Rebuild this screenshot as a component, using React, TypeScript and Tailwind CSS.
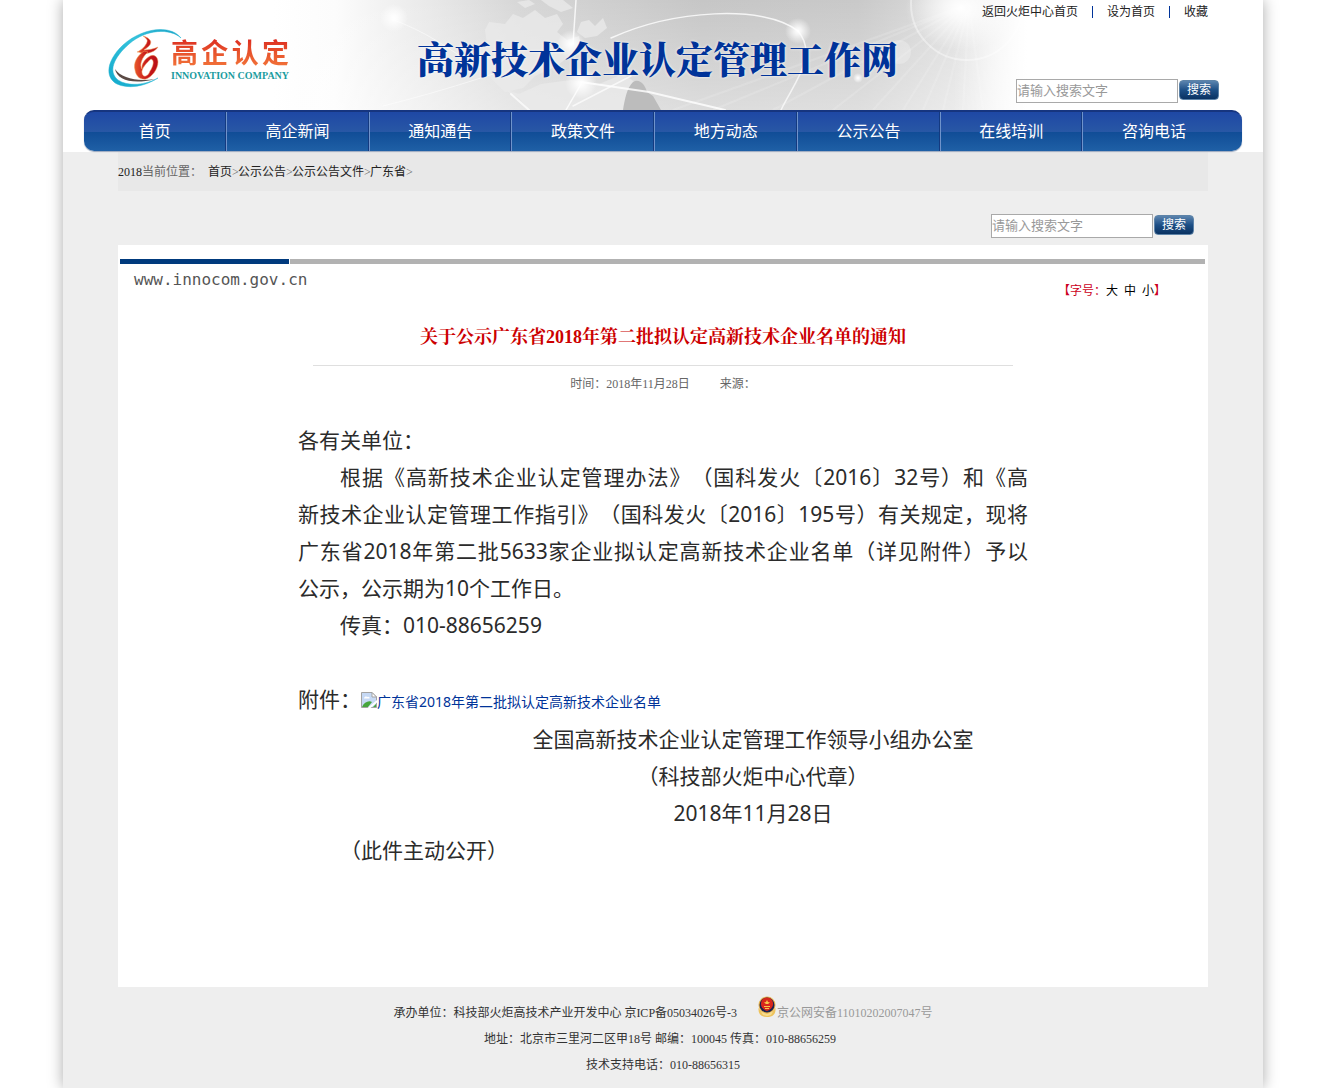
import { clsx } from "clsx";
import type { ReactNode } from "react";

const SONG = "font-['Liberation_Serif','Noto_Sans_CJK_SC',serif]";
const HEI = "font-['Noto_Sans','Noto_Sans_CJK_SC',sans-serif]";

const NAV_ITEMS = [
	"首页",
	"高企新闻",
	"通知通告",
	"政策文件",
	"地方动态",
	"公示公告",
	"在线培训",
	"咨询电话",
];

const CRUMBS = ["首页", "公示公告", "公示公告文件", "广东省"];

const TOP_LINKS = ["返回火炬中心首页", "设为首页", "收藏"];

const NOTICE_LINES = [
	"根据《高新技术企业认定管理办法》（国科发火〔2016〕32号）和《高",
	"新技术企业认定管理工作指引》（国科发火〔2016〕195号）有关规定，现将",
	"广东省2018年第二批5633家企业拟认定高新技术企业名单（详见附件）予以",
];

function LogoMark() {
	return (
		<svg
			viewBox="0 0 76 62"
			className="h-[62px] w-[76px] flex-none"
			aria-hidden="true"
		>
			<defs>
				<linearGradient id="ring" x1="0" y1="1" x2="1" y2="0">
					<stop offset="0" stopColor="#12a9cc" />
					<stop offset="0.6" stopColor="#35c3dc" />
					<stop offset="1" stopColor="#1c9fc4" />
				</linearGradient>
				<linearGradient id="flame" x1="0" y1="0" x2="1" y2="0">
					<stop offset="0" stopColor="#e8582c" />
					<stop offset="0.5" stopColor="#c81a1c" />
					<stop offset="1" stopColor="#b80f16" />
				</linearGradient>
			</defs>
			<path
				d="M73 12 C62 2 38 3 21 18 C5 32 0 46 10 54 C20 61 38 59 50 52 C36 61 20 63 9 58 C-4 51 -1 34 15 19 C34 2 62 -2 73 12Z"
				fill="url(#ring)"
				stroke="#22b5d2"
				strokeWidth="0.5"
			/>
			<path
				d="M7 43 C9 54 25 59 47 53 C29 56 13 52 7 43Z"
				fill="#5b4a45"
			/>
			<path
				d="M35 10 C42 12 45 16 41 20 C39 22 37 23 36 24 C40 24 46 23 50 21 C47 26 41 27 36 28 C34 27 32 26 29 26 C32 25 38 20 39 16 C40 14 38 12 35 10Z"
				fill="url(#flame)"
				stroke="#f3a45c"
				strokeWidth="0.5"
			/>
			<path
				fillRule="evenodd"
				d="M36 25 C29 30 25 37 27 44 C28 51 33 54 38 53 C44 51 50 43 50 36 C50 31 46 28 42 30 C37 33 33 38 34 43 C31 39 34 31 40 26Z M43 33 C47 34 45 41 42 45 C40 51 35 52 34 47 C33 43 39 36 43 33Z"
				fill="url(#flame)"
				stroke="#f3a45c"
				strokeWidth="0.5"
			/>
		</svg>
	);
}

function BannerArt() {
	return (
		<svg
			viewBox="0 0 780 110"
			preserveAspectRatio="xMidYMid slice"
			className="absolute top-0 left-1/2 h-[110px] w-[780px] -translate-x-1/2"
			aria-hidden="true"
		>
			<defs>
				<linearGradient id="sky" x1="0" y1="0" x2="1" y2="0">
					<stop offset="0" stopColor="#fff" />
					<stop offset="0.08" stopColor="#fcfcfc" />
					<stop offset="0.18" stopColor="#ececec" />
					<stop offset="0.32" stopColor="#d6d6d6" />
					<stop offset="0.55" stopColor="#c6c6c6" />
					<stop offset="0.75" stopColor="#c9c9c9" />
					<stop offset="0.9" stopColor="#e2e2e2" />
					<stop offset="1" stopColor="#fff" />
				</linearGradient>
				<radialGradient id="glow">
					<stop offset="0" stopColor="#fff" />
					<stop offset="0.25" stopColor="#fff" stopOpacity="0.8" />
					<stop offset="1" stopColor="#fff" stopOpacity="0" />
				</radialGradient>
				<linearGradient id="fade" x1="0" y1="0" x2="0" y2="1">
					<stop offset="0" stopColor="#fff" stopOpacity="0" />
					<stop offset="1" stopColor="#fff" stopOpacity="0.4" />
				</linearGradient>
				<linearGradient id="edge">
					<stop offset="0" stopColor="#fff" stopOpacity="0" />
					<stop offset="0.75" stopColor="#fff" />
				</linearGradient>
			</defs>
			<rect width="780" height="110" fill="url(#sky)" />
			<rect width="780" height="110" fill="url(#fade)" />
			<g fill="#ebebeb" opacity="0.75">
				<path d="M212 30 L216 22 L232 24 L240 14 L250 18 L262 10 L272 18 L284 14 L290 24 L284 32 L294 40 L306 36 L308 46 L296 56 L284 66 L262 76 L250 88 L232 92 L220 80 L206 68 L200 54 L214 44Z" />
				<path d="M244 2 L256 0 L262 4 L252 8Z M268 0 L290 0 L300 8 L288 12 L276 6Z" />
				<path d="M308 22 L316 20 L322 26 L330 18 L334 28 L324 36 L312 38 L304 32Z" />
				<path d="M232 90 L246 94 L268 84 L298 80 L326 84 L350 74 L362 82 L374 92 L376 110 L256 110 L246 98Z" />
			</g>
			<path
				d="M360 82 C366 78 372 84 374 92 L380 96 L388 110 L350 110 C352 98 354 88 360 82Z"
				fill="#bcbcbc"
			/>
			<g fill="none" stroke="#fff" strokeLinecap="round">
				<path
					d="M338 38 C400 10 490 4 525 31"
					strokeWidth="1.5"
					opacity="0.8"
				/>
				<path
					d="M525 31 C546 56 520 84 508 110"
					strokeWidth="1.5"
					opacity="0.7"
				/>
				<path
					d="M303 0 L300 44 M308 84 L293 110"
					strokeWidth="1.5"
					opacity="0.8"
				/>
				<path d="M308 82 L376 92 L452 110" strokeWidth="2" opacity="0.8" />
				<path d="M238 94 L256 110" strokeWidth="2" opacity="0.7" />
				<path d="M300 106 L358 76" strokeWidth="1.5" opacity="0.7" />
				<path d="M118 19 C150 30 180 50 200 66" opacity="0.5" />
				<path d="M110 106 C150 96 190 84 220 74" opacity="0.5" />
				<circle cx="694" cy="4" r="56" strokeWidth="2" opacity="0.4" />
			</g>
			<path
				d="M696 4 L400 110 M696 4 L440 110 M696 4 L500 110 M696 4 L560 110 M696 4 L600 110 M696 4 L630 110 M696 4 L650 110 M696 4 L670 110 M696 4 L690 110 M696 4 L710 110"
				stroke="#fff"
				opacity="0.14"
				strokeWidth="2"
			/>
			<g fill="url(#glow)">
				<circle cx="121" cy="18" r="14" />
				<circle cx="525" cy="31" r="13" />
				<circle cx="308" cy="83" r="16" />
				<circle cx="298" cy="44" r="14" />
				<circle cx="585" cy="78" r="5" />
				<ellipse cx="688" cy="8" rx="56" ry="42" />
			</g>
			<circle cx="626" cy="52" r="12" fill="#fff" opacity="0.25" />
			<rect x="680" width="100" height="110" fill="url(#edge)" />
		</svg>
	);
}

function BrokenImageIcon() {
	return (
		<svg
			viewBox="0 0 16 16"
			className="inline-block size-4 align-[-1px]"
			aria-hidden="true"
		>
			<path
				d="M0.5 0.5 H11 L15.5 5 V15.5 H0.5Z"
				fill="#c6d9f5"
				stroke="#a3a3a3"
			/>
			<path d="M3 6.5 C3 4 6 4 6.5 5 C8 4.5 9 5.5 8.5 6.5Z" fill="#fff" />
			<path d="M1 15 C3 10 8 8 11 10 L7 15Z" fill="#47a63c" />
			<path d="M11 0.5 V5 H15.5Z" fill="#fff" stroke="#a3a3a3" />
			<path d="M16 8 L6.5 16 H9.5 L16 10.5Z" fill="#fff" />
			<path d="M12 15 L15 12 V15Z" fill="#47a63c" />
		</svg>
	);
}

function PoliceBadge() {
	return (
		<svg viewBox="0 0 20 22" className="h-[22px] w-5" aria-hidden="true">
			<path
				d="M1.5 12 C1 18 4 21 10 21 C16 21 19 18 18.5 12 L14 17 H6Z"
				fill="#eec35c"
			/>
			<circle cx="10" cy="9" r="8.5" fill="#e9b44c" />
			<circle cx="10" cy="9" r="7.5" fill="#1b2350" />
			<path
				d="M10 1.5 C14 1.5 16.5 5 16 9 C15.5 12 13 14 10 15 C7 14 4.5 12 4 9 C3.5 5 6 1.5 10 1.5Z"
				fill="#d8271c"
			/>
			<path d="M10 4 L11 6 L13 6.5 L11 8 H9 L7 6.5 L9 6Z" fill="#f6c94c" />
			<path d="M7 10 H13 V11 H7Z M8 12 H12 V13 H8Z" fill="#f6c94c" />
			<path d="M4 16 L10 18 L16 16 L14 19 L10 20 L6 19Z" fill="#f7dc8d" />
		</svg>
	);
}

function SearchForm({ id, className }: { id: string; className?: string }) {
	return (
		<form
			className={clsx("flex items-start gap-px", className)}
			onSubmit={(event) => event.preventDefault()}
		>
			<input
				id={id}
				type="text"
				aria-label="搜索文字"
				placeholder="请输入搜索文字"
				className={clsx(
					HEI,
					"h-6 w-[162px] border border-[#a9a9a9] bg-white pb-0.5 text-[13px] leading-5 text-[#333] placeholder:text-[#999]",
				)}
			/>
			<button
				type="submit"
				className="mt-px h-5 w-10 rounded-[4px] border border-[#5d83a8] bg-linear-to-b from-[#5b84ae] via-[#1d4f86] to-[#0a3262] text-xs leading-4 text-white"
			>
				搜索
			</button>
		</form>
	);
}

function Header() {
	return (
		<header className="relative bg-white pb-px">
			<BannerArt />
			<div className="relative flex h-[110px] items-start justify-between pr-11 pl-[45px]">
				<div className="flex items-start gap-[128px]">
					<a href="#home" className="mt-[26px] flex">
						<LogoMark />
						<span className="-ml-[13px] flex flex-col pt-2">
							<span className="flex w-[118px] justify-between bg-linear-to-b from-[#d8101c] to-[#f47a3c] bg-clip-text font-['Noto_Sans_CJK_SC',sans-serif] text-[27px] leading-9 font-bold text-transparent">
								{[..."高企认定"].map((char) => (
									<span key={char}>{char}</span>
								))}
							</span>
							<span className="font-['Liberation_Serif',serif] text-[10px] leading-3 font-bold whitespace-nowrap text-[#1b9c9f]">
								INNOVATION COMPANY
							</span>
						</span>
					</a>
					<h1 className="mt-8 font-['Noto_Serif_CJK_SC','Noto_Sans_CJK_SC',serif] text-[37px] leading-[52px] font-black whitespace-nowrap text-[#003399] [text-shadow:0_0_3px_#fff]">
						高新技术企业认定管理工作网
					</h1>
				</div>
				<div className="flex flex-col items-end">
					<ul className="mt-[3px] mr-[11px] flex items-center text-xs leading-[18px]">
						{TOP_LINKS.map((label, index) => (
							<li key={label} className="flex items-center">
								{index > 0 && (
									<span className="mx-3.5 h-3 w-px bg-[#003399]" />
								)}
								<a href="#top">{label}</a>
							</li>
						))}
					</ul>
					<SearchForm id="site-search" className="mt-[58px]" />
				</div>
			</div>
			<nav className="relative mx-[21px] flex h-[41px] rounded-[10px] border-t-2 border-[#16357f] bg-[linear-gradient(#1e48a5,#2857a5_50%,#104c96_50%,#1f60a6)] pr-[17px] shadow-[0_1px_1px_#9aa7bd]">
				{NAV_ITEMS.map((item, index) => (
					<a
						key={item}
						href="#nav"
						className={clsx(
							HEI,
							"flex-1 text-center text-base leading-[38px] text-white",
							index > 0 &&
								"border-l border-[#6f93cb] shadow-[-1px_0_0_#143a80]",
						)}
					>
						{item}
					</a>
				))}
			</nav>
		</header>
	);
}

function Breadcrumb() {
	return (
		<div className="flex h-[39px] items-center bg-[#e8e8e8] text-xs">
			<span>2018</span>
			<span className="mr-1.5 text-[#666]">当前位置：</span>
			{CRUMBS.map((crumb) => (
				<span key={crumb}>
					<a href="#crumb">{crumb}</a>
					<span className="inline-block w-1.5 text-[#666]">&gt;</span>
				</span>
			))}
		</div>
	);
}

function Indented({ children }: { children: ReactNode }) {
	return <p className="indent-[2em]">{children}</p>;
}

function Article() {
	return (
		<main className="bg-white px-0.5 pt-3.5 pb-[118px]">
			<div className="mr-px flex h-[5px] gap-px">
				<div className="w-[169px] bg-[#003a7d]" />
				<div className="flex-1 bg-[#b2b2b2]" />
			</div>
			<div className="flex justify-between pr-10 pl-3.5">
				<p className="pt-1 font-['DejaVu_Sans_Mono',monospace] text-base leading-6 text-[#555]">
					www.innocom.gov.cn
				</p>
				<p className="flex pt-[17px] text-xs leading-5 text-[#cc0022]">
					<span>【字号：</span>
					<span className="flex gap-1.5 text-black">
						<button type="button">大</button>
						<button type="button">中</button>
						<button type="button">小</button>
					</span>
					<span>】</span>
				</p>
			</div>
			<div className="mx-auto max-w-[700px] text-center">
				<h2 className="border-b border-[#dfdfdf] pt-6 pb-4 font-['Liberation_Serif','Noto_Serif_CJK_SC','Noto_Sans_CJK_SC',serif] text-lg leading-6 font-bold text-[#cc0000]">
					关于公示广东省2018年第二批拟认定高新技术企业名单的通知
				</h2>
				<p className="pt-2 text-xs leading-5 text-[#666]">
					<span>时间：2018年11月28日</span>
					<span className="ml-[30px]">来源：</span>
				</p>
			</div>
			<div
				className={clsx(
					HEI,
					"mx-auto mt-7 max-w-[730px] text-[21px] leading-[37px] text-[#2b2b2b] [text-spacing-trim:space-all]",
				)}
			>
				<p>各有关单位：</p>
				<p>
					{NOTICE_LINES.map((line, index) => (
						<span
							key={line}
							className={clsx(
								"block text-justify [text-align-last:justify]",
								index === 0 && "indent-[2em]",
							)}
						>
							{line}
						</span>
					))}
					公示，公示期为10个工作日。
				</p>
				<Indented>传真：010-88656259</Indented>
				<p className="mt-[37px] mb-[3px]">
					附件：
					<a href="#attachment" className="text-sm text-[#003399]">
						<BrokenImageIcon />
						广东省2018年第二批拟认定高新技术企业名单
					</a>
				</p>
				<div className="pl-[180px] text-center">
					<p>全国高新技术企业认定管理工作领导小组办公室</p>
					<p>（科技部火炬中心代章）</p>
					<p>2018年11月28日</p>
				</div>
				<Indented>（此件主动公开）</Indented>
			</div>
		</main>
	);
}

function Footer() {
	return (
		<footer className="pt-[13px] pb-2.5 text-center text-xs leading-[26px] text-[#333]">
			<p className="flex h-[26px] items-center justify-center">
				<span>承办单位：科技部火炬高技术产业开发中心 京ICP备05034026号-3</span>
				<a href="#beian" className="ml-5 flex items-center text-[#999]">
					<span className="-mt-3">
						<PoliceBadge />
					</span>
					京公网安备11010202007047号
				</a>
			</p>
			<p className="pr-1.5">
				地址：北京市三里河二区甲18号 邮编：100045 传真：010-88656259
			</p>
			<p>技术支持电话：010-88656315</p>
		</footer>
	);
}

export default function App() {
	return (
		<div className={clsx(SONG, "overflow-hidden bg-white text-[#222]")}>
			<div className="mx-auto min-h-screen max-w-[1200px] bg-[#eee] shadow-[0_0_14px_#aaa]">
				<Header />
				<div className="mx-[55px]">
					<Breadcrumb />
					<div className="flex justify-end pt-[23px] pr-3.5 pb-[7px]">
						<SearchForm id="article-search" />
					</div>
					<Article />
				</div>
				<Footer />
			</div>
		</div>
	);
}
